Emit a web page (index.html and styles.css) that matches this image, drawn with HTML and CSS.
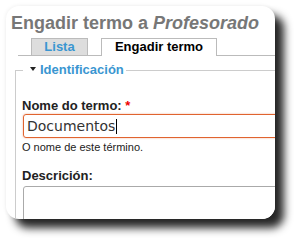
FILE: index.html
```html
<!DOCTYPE html>
<html>
<head>
<meta charset="utf-8">
<link rel="stylesheet" href="styles.css">
</head>
<body>
<div class="card">
  <h1 class="title">Engadir termo a <em>Profesorado</em></h1>
  <ul class="tabs">
    <li class="tab tab-list">Lista</li>
    <li class="tab tab-active">Engadir termo</li>
  </ul>
  <fieldset class="group">
    <legend class="legend"><span class="arrow"></span>Identificación</legend>
    <label class="label">Nome do termo: <span class="req">*</span></label>
    <div class="input"><span>Documentos</span><span class="caret"></span></div>
    <div class="desc">O nome de este término.</div>
    <label class="label label-desc">Descrición:</label>
    <div class="textarea"></div>
  </fieldset>
</div>
</body>
</html>
```
FILE: styles.css
```css
html, body {
  margin: 0;
  padding: 0;
  background: #fff;
}
body {
  width: 298px;
  height: 243px;
  overflow: hidden;
  font-family: "Liberation Sans", Arial, sans-serif;
}
.card {
  margin: 6px 0 0 6px;
  width: 269px;
  height: 213px;
  border-radius: 13px;
  overflow: hidden;
  background: #fff;
  box-shadow: 0 0 4px rgba(0,0,0,0.08), 9px 9px 8px rgba(0,0,0,0.85);
  padding-top: 6px;
  box-sizing: border-box;
}
.title {
  margin: 0 0 0 5px;
  font-size: 18px;
  line-height: 22px;
  font-weight: bold;
  color: #777;
  white-space: nowrap;
}
.title em {
  font-style: italic;
}
.tabs {
  list-style: none;
  margin: 4px 0 0 12px;
  padding: 0 0 0 13px;
  width: 400px;
  display: flex;
  gap: 13px;
  border-bottom: 1px solid #bbb;
  height: 17px;
}
.tab {
  box-sizing: border-box;
  height: 17px;
  border: 1px solid #bbb;
  border-bottom: none;
  font-size: 13px;
  line-height: 16px;
  font-weight: bold;
  text-align: center;
  white-space: nowrap;
}
.tab-list {
  width: 57px;
  background: #ddd;
  color: #3a96d1;
}
.tab-active {
  width: 116px;
  height: 18px;
  background: #fff;
  color: #000;
}
.group {
  margin: 6px 0 0 9px;
  padding: 0 0 0 6px;
  width: 400px;
  border: 1px solid #ccc;
  border-right: none;
  box-sizing: border-box;
}
.legend {
  margin-left: 1px;
  padding: 0 2px 0 7px;
  font-size: 13px;
  line-height: 16px;
  font-weight: bold;
  color: #3a96d1;
}
.arrow {
  display: inline-block;
  width: 0;
  height: 0;
  border-left: 3.5px solid transparent;
  border-right: 3.5px solid transparent;
  border-top: 4px solid #222;
  margin-right: 4px;
  vertical-align: 3px;
}
.label {
  display: block;
  margin-top: 20px;
  font-size: 13px;
  line-height: 16px;
  font-weight: bold;
  color: #222;
}
.req {
  color: #e00;
}
.input {
  margin-left: 1px;
  width: 360px;
  height: 24px;
  box-sizing: border-box;
  border: 1px solid #e0642f;
  border-radius: 3px;
  box-shadow: 0 0 2px rgba(230,110,60,0.55);
  padding-left: 3px;
  font-family: "DejaVu Sans", sans-serif;
  font-size: 14px;
  line-height: 22px;
  color: #333;
  display: flex;
  align-items: center;
}
.caret {
  display: inline-block;
  width: 1px;
  height: 15px;
  background: #000;
  margin-left: 1px;
}
.desc {
  margin-top: 2px;
  font-size: 11px;
  line-height: 14px;
  color: #222;
}
.label-desc {
  margin-top: 14px;
}
.textarea {
  margin-top: 2px;
  margin-left: 1px;
  width: 360px;
  height: 60px;
  border: 1px solid #aaa;
  border-radius: 3px;
  background: #fff;
}
```
